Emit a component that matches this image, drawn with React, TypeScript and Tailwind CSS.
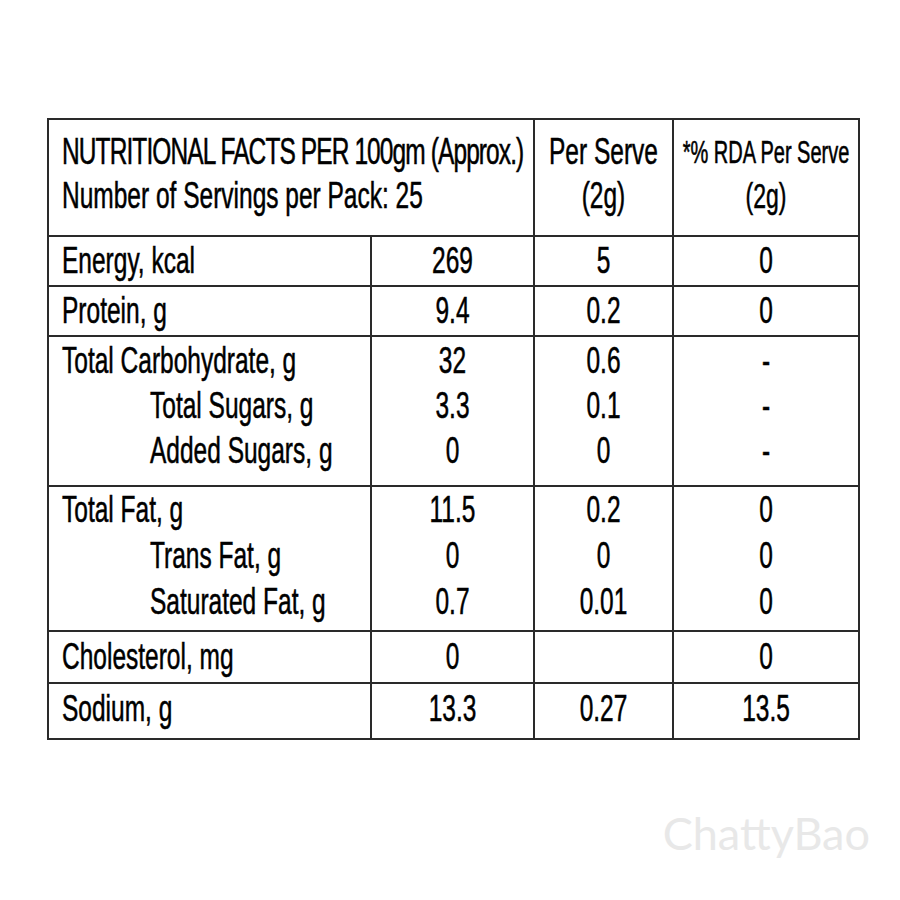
const font = "font-['Liberation_Sans_Narrow','Arial_Narrow','Liberation_Sans',Arial,sans-serif]";

type Line = { label: string; sub?: boolean; per100: string; serve: string; rda: string };
type Group = { lines: Line[]; lineH: string; cell: string };

const groups: Group[] = [
  { lineH: "h-[48px]", cell: "h-[48px]", lines: [{ label: "Energy, kcal", per100: "269", serve: "5", rda: "0" }] },
  { lineH: "h-[48px]", cell: "h-[48px]", lines: [{ label: "Protein, g", per100: "9.4", serve: "0.2", rda: "0" }] },
  {
    lineH: "h-[45px]",
    cell: "h-[148px] pt-[2px]",
    lines: [
      { label: "Total Carbohydrate, g", per100: "32", serve: "0.6", rda: "-" },
      { label: "Total Sugars, g", sub: true, per100: "3.3", serve: "0.1", rda: "-" },
      { label: "Added Sugars, g", sub: true, per100: "0", serve: "0", rda: "-" },
    ],
  },
  {
    lineH: "h-[46px]",
    cell: "h-[143px]",
    lines: [
      { label: "Total Fat, g", per100: "11.5", serve: "0.2", rda: "0" },
      { label: "Trans Fat, g", sub: true, per100: "0", serve: "0", rda: "0" },
      { label: "Saturated Fat, g", sub: true, per100: "0.7", serve: "0.01", rda: "0" },
    ],
  },
  { lineH: "h-[50px]", cell: "h-[50px]", lines: [{ label: "Cholesterol, mg", per100: "0", serve: "", rda: "0" }] },
  { lineH: "h-[50px]", cell: "h-[54px] pb-[3px]", lines: [{ label: "Sodium, g", per100: "13.3", serve: "0.27", rda: "13.5" }] },
];

// the label's type is tall and narrow, so stretch it vertically
function T({ children, className = "" }: { children: React.ReactNode; className?: string }) {
  return (
    <span className={`inline-block scale-y-[1.54] whitespace-nowrap [-webkit-text-stroke:0.35px_#000] ${className}`}>
      {children}
    </span>
  );
}

function Column({ group, pick, left }: { group: Group; pick: (l: Line) => string; left?: boolean }) {
  return (
    <div className={`bg-white flex flex-col ${group.cell}`}>
      {group.lines.map((l, i) => (
        <div
          key={i}
          className={`${group.lineH} flex items-center ${
            left ? (l.sub ? "pl-[101px]" : "pl-[13px]") : "justify-center"
          }`}
        >
          <T>{pick(l)}</T>
        </div>
      ))}
    </div>
  );
}

export default function App() {
  return (
    <div className={`min-h-[900px] w-[900px] bg-white text-black ${font}`}>
      <div className="pt-[118px] pl-[47px]">
        <div className="w-[813px] bg-[#2a2a2a] p-[2px] grid grid-cols-[321px_161px_137px_184px] gap-[2px] text-[24.5px] leading-none">
          {/* Header */}
          <div className="col-span-2 bg-white h-[115px] pt-[10px] pl-[13px]">
            <div className="h-[44px] flex items-center">
              <T className="tracking-[-0.9px]">NUTRITIONAL FACTS PER 100gm (Approx.)</T>
            </div>
            <div className="h-[44px] flex items-center">
              <T>Number of Servings per Pack: 25</T>
            </div>
          </div>
          <div className="bg-white h-[115px] pt-[10px] flex flex-col items-center">
            <div className="h-[44px] flex items-center">
              <T>Per Serve</T>
            </div>
            <div className="h-[44px] flex items-center">
              <T>(2g)</T>
            </div>
          </div>
          <div className="bg-white h-[115px] pt-[10px] flex flex-col items-center">
            <div className="h-[44px] flex items-center text-[20px]">
              <T>*% RDA Per Serve</T>
            </div>
            <div className="h-[44px] flex items-center text-[23px]">
              <T>(2g)</T>
            </div>
          </div>

          {/* Rows */}
          {groups.map((g, gi) => (
            <div key={gi} className="contents">
              <Column group={g} pick={(l) => l.label} left />
              <Column group={g} pick={(l) => l.per100} />
              <Column group={g} pick={(l) => l.serve} />
              <Column group={g} pick={(l) => l.rda} />
            </div>
          ))}
        </div>
      </div>

      {/* Watermark */}
      <div className="mt-[71px] pr-[30px] text-right font-['Lato',sans-serif] text-[45px] leading-none text-[#e8e8e8]">
        ChattyBao
      </div>
    </div>
  );
}
